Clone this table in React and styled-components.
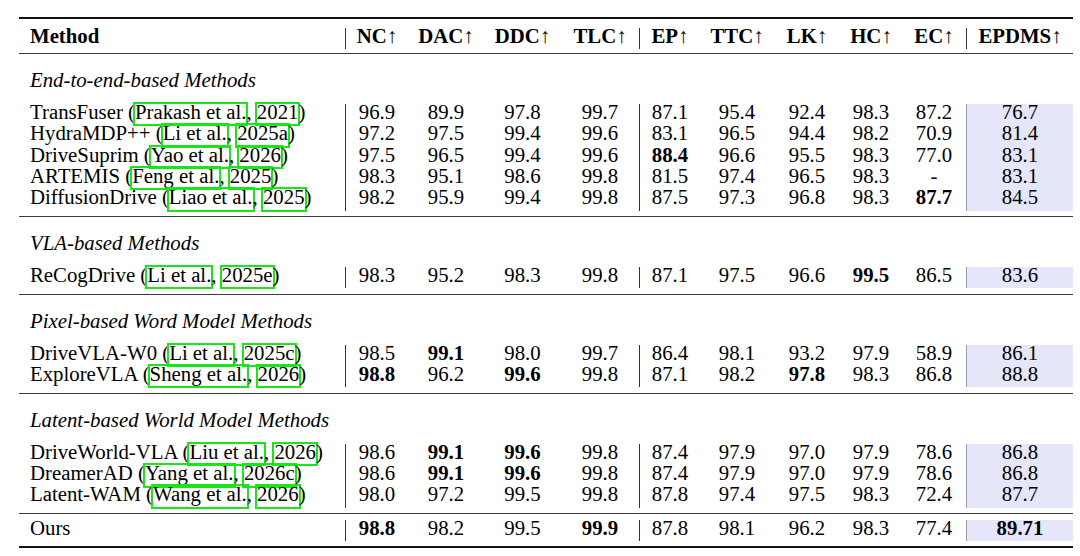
import React from "react";
import styled, { createGlobalStyle } from "styled-components";

const GlobalStyle = createGlobalStyle`
  html, body {
    margin: 0;
    padding: 0;
    background: #fff;
  }
  body {
    font-family: "Liberation Serif", "Times New Roman", serif;
    color: #000;
  }
`;

const Page = styled.div`
  padding: 17px 0 0 19px;
`;

const Table = styled.table`
  width: 1054px;
  table-layout: fixed;
  border-collapse: separate;
  border-spacing: 0;
  font-family: "Liberation Serif", "Times New Roman", serif;
  font-size: 20.8px;
  color: #000;

  & th,
  & td {
    vertical-align: top;
    padding-left: 0;
    padding-right: 0;
  }
`;

const Col = styled.col`
  width: ${(p) => p.$w}px;
`;

const HeadRow = styled.tr`
  & > th {
    padding-top: 9.1px;
    padding-bottom: 3.6px;
    border-top: 2px solid #111;
    border-bottom: 1px solid #3a3a3a;
    font-weight: 700;
  }
`;

const GroupRow = styled.tr`
  & > td {
    padding-top: 18.4px;
    padding-bottom: 10.4px;
    font-style: italic;
  }
`;

const DataRow = styled.tr`
  & > td {
    padding-top: 0;
    padding-bottom: ${(p) => (p.$last ? "5.4px" : "0")};
    border-bottom: ${(p) => (p.$last ? "1px solid #3a3a3a" : "none")};
  }
`;

const TotalRow = styled.tr`
  & > td {
    padding-top: 5.8px;
    padding-bottom: 4.6px;
    border-bottom: 2px solid #111;
  }
`;

// one LaTeX strut: bars and shading only cover this box
const Strut = styled.div`
  box-sizing: border-box;
  height: 21.3px;
  line-height: 15.76px;
  white-space: nowrap;
  text-align: ${(p) => (p.$left ? "left" : "center")};
  padding-left: ${(p) => (p.$left ? "11px" : "0")};
  border-left: ${(p) =>
    p.$bar ? `1px solid ${p.$shade ? "#9d9db0" : "#333"}` : "none"};
  background: ${(p) => (p.$shade ? "#e6e6fa" : "transparent")};
  font-weight: ${(p) => (p.$bold ? 700 : "inherit")};
`;

const Arrow = styled.span`
  font-weight: 400;
`;

const Cite = styled.span`
  display: inline-block;
  line-height: 15.4px;
  padding-bottom: 5px;
  outline: 2px solid #19e619;
`;

const columns = ["NC", "DAC", "DDC", "TLC", "EP", "TTC", "LK", "HC", "EC", "EPDMS"];
const widths = [63, 76, 77, 78, 61, 74, 66, 62, 64, 107];
const bars = [0, 4, 9];
const SCORE = 9;

const groups = [
  {
    title: "End-to-end-based Methods",
    rows: [
      { name: "TransFuser", author: "Prakash et al.", year: "2021", vals: ["96.9", "89.9", "97.8", "99.7", "87.1", "95.4", "92.4", "98.3", "87.2", "76.7"], bold: [] },
      { name: "HydraMDP++", author: "Li et al.", year: "2025a", vals: ["97.2", "97.5", "99.4", "99.6", "83.1", "96.5", "94.4", "98.2", "70.9", "81.4"], bold: [] },
      { name: "DriveSuprim", author: "Yao et al.", year: "2026", vals: ["97.5", "96.5", "99.4", "99.6", "88.4", "96.6", "95.5", "98.3", "77.0", "83.1"], bold: [4] },
      { name: "ARTEMIS", author: "Feng et al.", year: "2025", vals: ["98.3", "95.1", "98.6", "99.8", "81.5", "97.4", "96.5", "98.3", "-", "83.1"], bold: [] },
      { name: "DiffusionDrive", author: "Liao et al.", year: "2025", vals: ["98.2", "95.9", "99.4", "99.8", "87.5", "97.3", "96.8", "98.3", "87.7", "84.5"], bold: [8] },
    ],
  },
  {
    title: "VLA-based Methods",
    rows: [
      { name: "ReCogDrive", author: "Li et al.", year: "2025e", vals: ["98.3", "95.2", "98.3", "99.8", "87.1", "97.5", "96.6", "99.5", "86.5", "83.6"], bold: [7] },
    ],
  },
  {
    title: "Pixel-based Word Model Methods",
    rows: [
      { name: "DriveVLA-W0", author: "Li et al.", year: "2025c", vals: ["98.5", "99.1", "98.0", "99.7", "86.4", "98.1", "93.2", "97.9", "58.9", "86.1"], bold: [1] },
      { name: "ExploreVLA", author: "Sheng et al.", year: "2026", vals: ["98.8", "96.2", "99.6", "99.8", "87.1", "98.2", "97.8", "98.3", "86.8", "88.8"], bold: [0, 2, 6] },
    ],
  },
  {
    title: "Latent-based World Model Methods",
    rows: [
      { name: "DriveWorld-VLA", author: "Liu et al.", year: "2026", vals: ["98.6", "99.1", "99.6", "99.8", "87.4", "97.9", "97.0", "97.9", "78.6", "86.8"], bold: [1, 2] },
      { name: "DreamerAD", author: "Yang et al.", year: "2026c", vals: ["98.6", "99.1", "99.6", "99.8", "87.4", "97.9", "97.0", "97.9", "78.6", "86.8"], bold: [1, 2] },
      { name: "Latent-WAM", author: "Wang et al.", year: "2026", vals: ["98.0", "97.2", "99.5", "99.8", "87.8", "97.4", "97.5", "98.3", "72.4", "87.7"], bold: [] },
    ],
  },
];

const ours = {
  vals: ["98.8", "98.2", "99.5", "99.9", "87.8", "98.1", "96.2", "98.3", "77.4", "89.71"],
  bold: [0, 3, 9],
};

function Values({ vals, bold }) {
  return vals.map((v, i) => (
    <td key={i}>
      <Strut
        $bar={bars.includes(i)}
        $shade={i === SCORE}
        $bold={bold.includes(i)}
      >
        {v}
      </Strut>
    </td>
  ));
}

function App() {
  return (
    <Page>
      <GlobalStyle />
      <Table>
        <colgroup>
          <Col $w={326} />
          {widths.map((w, i) => (
            <Col key={i} $w={w} />
          ))}
        </colgroup>
        <thead>
          <HeadRow>
            <th>
              <Strut $left>Method</Strut>
            </th>
            {columns.map((c, i) => (
              <th key={c}>
                <Strut $bar={bars.includes(i)}>
                  {c}
                  <Arrow>↑</Arrow>
                </Strut>
              </th>
            ))}
          </HeadRow>
        </thead>
        {groups.map((g) => (
          <tbody key={g.title}>
            <GroupRow>
              <td colSpan={11}>
                <Strut $left>{g.title}</Strut>
              </td>
            </GroupRow>
            {g.rows.map((r, idx) => (
              <DataRow key={r.name} $last={idx === g.rows.length - 1}>
                <td>
                  <Strut $left>
                    {r.name} (<Cite>{r.author}</Cite>, <Cite>{r.year}</Cite>)
                  </Strut>
                </td>
                <Values vals={r.vals} bold={r.bold} />
              </DataRow>
            ))}
          </tbody>
        ))}
        <tbody>
          <TotalRow>
            <td>
              <Strut $left>Ours</Strut>
            </td>
            <Values vals={ours.vals} bold={ours.bold} />
          </TotalRow>
        </tbody>
      </Table>
    </Page>
  );
}

export default App;
